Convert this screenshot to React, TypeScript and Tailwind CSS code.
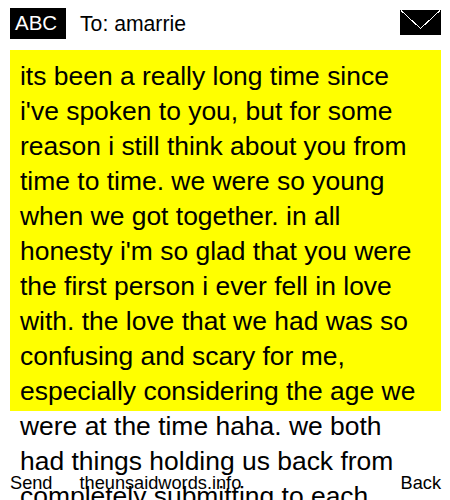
export default function App() {
  return (
    <div className="relative h-[500px] w-[450px] overflow-hidden bg-white text-black font-['Liberation_Sans',Arial,sans-serif]">
      {/* Header */}
      <div className="flex h-[50px] items-start pl-[10px] pr-[9px] pt-[8px]">
        <div className="flex h-[31px] w-[56px] items-center bg-black pl-[5px] text-[20.5px] text-white">ABC</div>
        <div className="ml-[14px] flex h-[31px] flex-1 items-center text-[21.2px]">To: amarrie</div>
        <svg className="mt-[2px]" width="41" height="25" viewBox="0 0 41 25" shapeRendering="crispEdges">
          <rect width="41" height="25" fill="#000" />
          <path d="M1 0.5 L20.5 18.5 L40 0.5" fill="none" stroke="#fff" strokeWidth="1" />
        </svg>
      </div>

      {/* Message, runs past the yellow area */}
      <div className="ml-[10px] h-[361px] w-[431px] bg-[#ffff00] px-[10px] pt-[9px]">
        <p className="text-[26.45px] leading-[35px]">
          its been a really long time since i've spoken to you, but for some reason i still think about you from time to time. we were so young when we got together. in all honesty i'm so glad that you were the first person i ever fell in love with. the love that we had was so confusing and scary for me, especially considering the age we were at the time haha. we both had things holding us back from completely submitting to each
        </p>
      </div>

      {/* Soft keys sit over the text */}
      <div className="absolute bottom-0 left-0 right-0 flex h-[32px] items-center justify-between pl-[10px] pr-[9px] text-[18.2px]">
        <div className="flex gap-[27px]">
          <span>Send</span>
          <span>theunsaidwords.info</span>
        </div>
        <span>Back</span>
      </div>
    </div>
  );
}
